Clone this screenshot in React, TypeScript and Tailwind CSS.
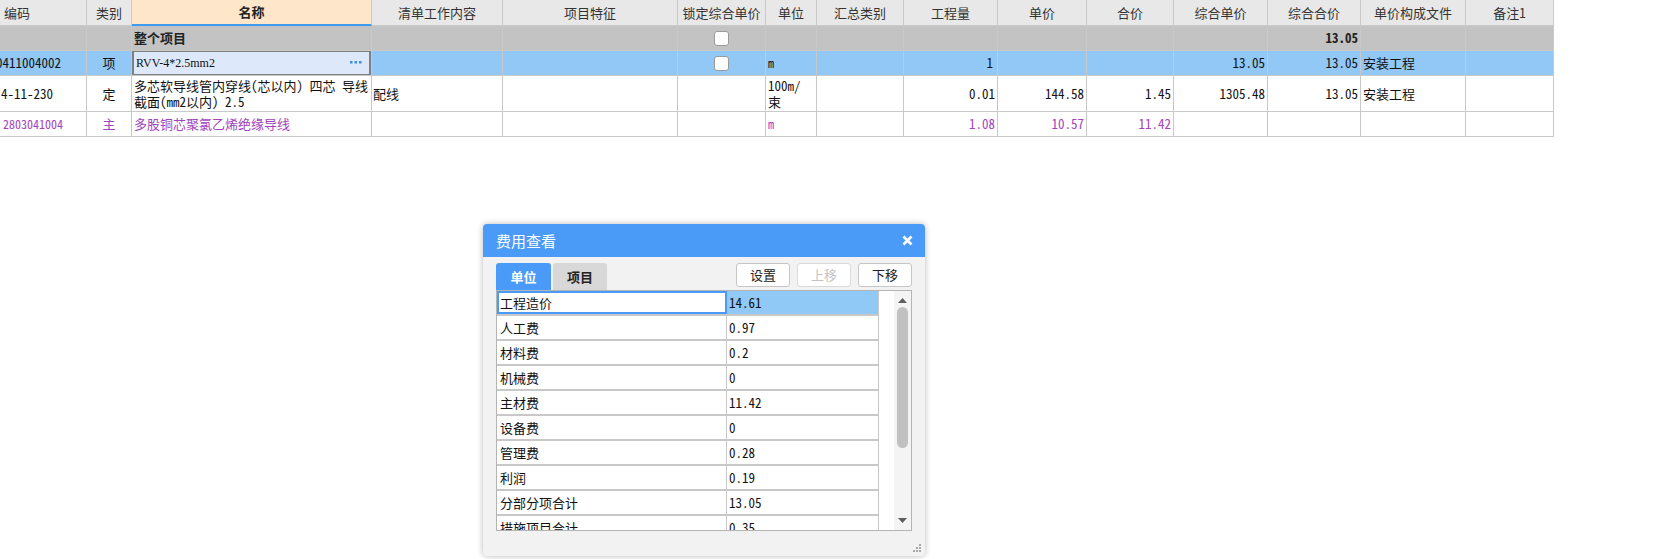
import React from 'react';

const FONT = "font-['Noto_Sans_Mono_CJK_SC','Liberation_Mono','Noto_Sans_CJK_SC',monospace]";
const UI = "font-['Noto_Sans_CJK_SC','Liberation_Sans',sans-serif]";

const COLS =
  'grid grid-cols-[87px_45px_240px_131px_175px_88px_51px_87px_94px_89px_87px_94px_93px_105px_88px]';

const headers = [
  '编码',
  '类别',
  '名称',
  '清单工作内容',
  '项目特征',
  '锁定综合单价',
  '单位',
  '汇总类别',
  '工程量',
  '单价',
  '合价',
  '综合单价',
  '综合合价',
  '单价构成文件',
  '备注1',
];

const costRows = [
  ['工程造价', '14.61'],
  ['人工费', '0.97'],
  ['材料费', '0.2'],
  ['机械费', '0'],
  ['主材费', '11.42'],
  ['设备费', '0'],
  ['管理费', '0.28'],
  ['利润', '0.19'],
  ['分部分项合计', '13.05'],
  ['措施项目合计', '0.35'],
];

function Cell({
  children,
  className = '',
}: {
  children?: React.ReactNode;
  className?: string;
}) {
  return (
    <div
      className={`border-r border-b border-[#c9c9c9] overflow-hidden flex items-center whitespace-nowrap ${className}`}
    >
      {children}
    </div>
  );
}

function Checkbox() {
  return <span className="block w-[15px] h-[15px] bg-white border border-[#9a9a9a] rounded-[3px]" />;
}

function Grip() {
  return (
    <svg width="8" height="8" viewBox="0 0 8 8" className="fill-[#a8a8a8]">
      <rect x="6" y="0" width="2" height="2" />
      <rect x="3" y="3" width="2" height="2" />
      <rect x="6" y="3" width="2" height="2" />
      <rect x="0" y="6" width="2" height="2" />
      <rect x="3" y="6" width="2" height="2" />
      <rect x="6" y="6" width="2" height="2" />
    </svg>
  );
}

function CostDialog() {
  return (
    <div
      className={`absolute left-[483px] top-[224px] w-[442px] h-[332px] rounded-[4px] bg-[#f2f2f2] shadow-[0_0_6px_rgba(0,0,0,0.28)] overflow-hidden ${UI}`}
    >
      {/* Title bar */}
      <div className="h-[33px] bg-[#4a9bf8] flex items-center justify-between pl-[13px] pr-[12px]">
        <span className="text-white text-[15px] leading-none">费用查看</span>
        <svg width="11" height="11" viewBox="0 0 11 11">
          <path d="M1.5 1.5 L9.5 9.5 M9.5 1.5 L1.5 9.5" stroke="white" strokeWidth="2.6" />
        </svg>
      </div>

      <div className="px-[13px] pt-[6px]">
        {/* Tabs + buttons */}
        <div className="flex justify-between h-[27px]">
          <div className="flex gap-[2px]">
            <div className="w-[55px] h-[27px] rounded-t-[3px] bg-[#4a9bf8] text-white text-[13px] font-bold flex items-center justify-center">
              单位
            </div>
            <div className="w-[54px] h-[27px] rounded-t-[3px] bg-[#d8d8d8] text-[#222] text-[13px] font-bold flex items-center justify-center">
              项目
            </div>
          </div>
          <div className="flex gap-[7px]">
            <button className="w-[54px] h-[24px] bg-white border border-[#c6c6c6] rounded-[3px] text-[13px] text-[#222]">
              设置
            </button>
            <button className="w-[54px] h-[24px] bg-white border border-[#dadada] rounded-[3px] text-[13px] text-[#c4c4c4]">
              上移
            </button>
            <button className="w-[54px] h-[24px] bg-white border border-[#c6c6c6] rounded-[3px] text-[13px] text-[#222]">
              下移
            </button>
          </div>
        </div>

        {/* Cost grid */}
        <div className="w-[416px] h-[241px] border border-[#b4b4b4] bg-white flex overflow-hidden">
          <div className={`w-[382px] ${FONT}`}>
            {costRows.map(([label, value], i) => (
              <div key={label} className="flex h-[25px] border-b-2 border-[#c8c8c8]">
                <div
                  className={
                    i === 0
                      ? 'w-[230px] border-2 border-[#4a9bf8] pl-[1px] flex items-center text-[13px] text-[#111]'
                      : 'w-[230px] border-r border-[#c8c8c8] pl-[3px] flex items-center text-[13px] text-[#111]'
                  }
                >
                  {label}
                </div>
                <div
                  className={
                    i === 0
                      ? 'w-[152px] border-r border-[#c8c8c8] bg-[#90c8f6] pl-[2px] flex items-center text-[13px] text-[#111]'
                      : 'w-[152px] border-r border-[#c8c8c8] pl-[2px] flex items-center text-[13px] text-[#111]'
                  }
                >
                  {value}
                </div>
              </div>
            ))}
          </div>
          <div className="w-[15px]" />
          {/* Scrollbar */}
          <div className="w-[17px] h-full bg-[#f4f4f4] flex flex-col items-center">
            <svg width="9" height="5" viewBox="0 0 9 5" className="mt-[7px]">
              <path d="M0 5 L4.5 0 L9 5 Z" fill="#5e5e5e" />
            </svg>
            <div className="mt-[4px] w-[11px] h-[141px] rounded-full bg-[#c1c1c1]" />
            <div className="flex-1" />
            <svg width="9" height="5" viewBox="0 0 9 5" className="mb-[7px]">
              <path d="M0 0 L9 0 L4.5 5 Z" fill="#5e5e5e" />
            </svg>
          </div>
        </div>
      </div>

      <div className="absolute right-[4px] bottom-[4px]">
        <Grip />
      </div>
    </div>
  );
}

export default function App() {
  return (
    <div className={`relative w-[1678px] h-[559px] bg-white overflow-hidden text-[#111] ${FONT}`}>
      <div className="w-[1554px] text-[13px] leading-[16px]">
        {/* Header */}
        <div className={`${COLS} h-[26px] bg-[#e8e8e8] text-[#333]`}>
          {headers.map((h, i) => (
            <Cell
              key={h}
              className={
                i === 0
                  ? 'pl-[4px]'
                  : i === 2
                    ? 'justify-center bg-[#fde6c9] font-bold border-b-2 border-b-[#3d9bf0] text-[#222]'
                    : 'justify-center'
              }
            >
              {h}
            </Cell>
          ))}
        </div>

        {/* 整个项目 */}
        <div className={`${COLS} h-[25px] bg-[#c3c3c3]`}>
          <Cell />
          <Cell />
          <Cell className="pl-[2px] font-bold text-[#222]">整个项目</Cell>
          <Cell />
          <Cell />
          <Cell className="justify-center">
            <Checkbox />
          </Cell>
          <Cell />
          <Cell />
          <Cell />
          <Cell />
          <Cell />
          <Cell />
          <Cell className="justify-end pr-[2px] font-bold text-[#222]">13.05</Cell>
          <Cell />
          <Cell />
        </div>

        {/* 项 */}
        <div className={`${COLS} h-[25px] bg-[#92c8f5]`}>
          <Cell>
            <span className="ml-[-4px]">0411004002</span>
          </Cell>
          <Cell className="justify-center">项</Cell>
          <Cell className="p-0">
            <div className="w-full h-[26px] -mt-px border-2 border-[#7f7f7f] bg-[#dde9fb] flex items-center justify-between pl-[2px] pr-[7px]">
              <span className="text-[12px] font-['Liberation_Serif',serif]">RVV-4*2.5mm2</span>
              <svg width="12" height="3" viewBox="0 0 12 3" className="fill-[#3c8fe0]">
                <rect x="0" y="0" width="2.5" height="2.5" />
                <rect x="4.5" y="0" width="2.5" height="2.5" />
                <rect x="9" y="0" width="2.5" height="2.5" />
              </svg>
            </div>
          </Cell>
          <Cell />
          <Cell />
          <Cell className="justify-center">
            <Checkbox />
          </Cell>
          <Cell className="pl-[2px] text-[12px]">m</Cell>
          <Cell />
          <Cell className="justify-end pr-[4px]">1</Cell>
          <Cell />
          <Cell />
          <Cell className="justify-end pr-[2px]">13.05</Cell>
          <Cell className="justify-end pr-[2px]">13.05</Cell>
          <Cell className="pl-[2px]">安装工程</Cell>
          <Cell />
        </div>

        {/* 定 */}
        <div className={`${COLS} h-[36px] bg-white`}>
          <Cell className="pl-[1px]">4-11-230</Cell>
          <Cell className="justify-center">定</Cell>
          <Cell className="pl-[2px] whitespace-normal">
            <div className="leading-[16px]">
              <div>多芯软导线管内穿线(芯以内) 四芯 导线</div>
              <div>截面(mm2以内) 2.5</div>
            </div>
          </Cell>
          <Cell className="pl-[1px]">配线</Cell>
          <Cell />
          <Cell />
          <Cell className="pl-[2px]">
            <div className="leading-[16px]">
              <div>100m/</div>
              <div>束</div>
            </div>
          </Cell>
          <Cell />
          <Cell className="justify-end pr-[2px]">0.01</Cell>
          <Cell className="justify-end pr-[2px]">144.58</Cell>
          <Cell className="justify-end pr-[2px]">1.45</Cell>
          <Cell className="justify-end pr-[2px]">1305.48</Cell>
          <Cell className="justify-end pr-[2px]">13.05</Cell>
          <Cell className="pl-[2px]">安装工程</Cell>
          <Cell />
        </div>

        {/* 主 */}
        <div className={`${COLS} h-[25px] bg-white text-[#a144bd]`}>
          <Cell className="pl-[3px] text-[12px]">2803041004</Cell>
          <Cell className="justify-center">主</Cell>
          <Cell className="pl-[2px]">多股铜芯聚氯乙烯绝缘导线</Cell>
          <Cell />
          <Cell />
          <Cell />
          <Cell className="pl-[2px] text-[12px]">m</Cell>
          <Cell />
          <Cell className="justify-end pr-[2px]">1.08</Cell>
          <Cell className="justify-end pr-[2px]">10.57</Cell>
          <Cell className="justify-end pr-[2px]">11.42</Cell>
          <Cell />
          <Cell />
          <Cell />
          <Cell />
        </div>
      </div>

      <CostDialog />
    </div>
  );
}
